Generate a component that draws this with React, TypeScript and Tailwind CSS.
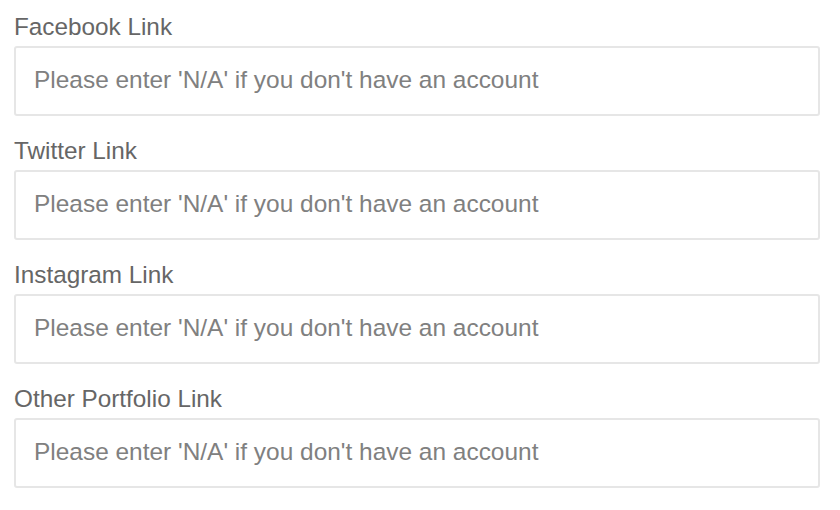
import React from "react";

const fields = ["Facebook Link", "Twitter Link", "Instagram Link", "Other Portfolio Link"];

export default function App() {
  return (
    <div className="w-[840px] h-[510px] bg-white pt-[8px] pl-[14px]" style={{ fontFamily: '"Liberation Sans", Arial, sans-serif' }}>
      {fields.map((f) => (
        <div key={f} className="mb-[16px] w-[806px]">
          <label className="block text-[24.3px] leading-[36px] text-[#666666] mb-[2px] pt-[1px] h-[36px]">{f}</label>
          <input
            type="text"
            placeholder="Please enter 'N/A' if you don't have an account"
            className="block w-[806px] h-[70px] border-2 border-[#e6e6e6] rounded-[3px] pl-[18px] pb-[2px] text-[24.45px] text-[#555] placeholder:text-[#808080] outline-none bg-white"
            style={{ fontFamily: '"Liberation Sans", Arial, sans-serif' }}
          />
        </div>
      ))}
    </div>
  );
}
